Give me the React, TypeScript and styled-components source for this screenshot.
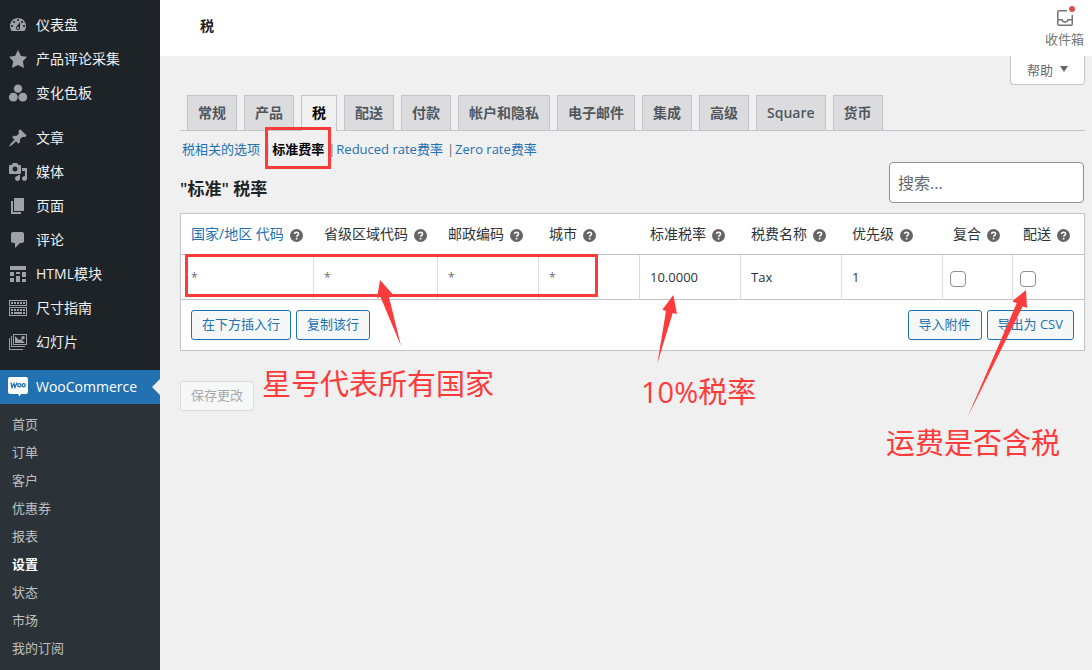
import React from "react";
import styled, { createGlobalStyle, css } from "styled-components";

const RED = "#fe3b3b";
const BORDER = "#c3c4c7";
const BLUE = "#2271b1";

const GlobalStyle = createGlobalStyle`
  * { box-sizing: border-box; }
  body {
    margin: 0;
    background: #f0f0f1;
    color: #3c434a;
    font-family: "Open Sans", "Noto Sans CJK SC", sans-serif;
    font-size: 13px;
    line-height: 20px;
  }
  button, input { font-family: inherit; }
  a { text-decoration: none; }
`;

const Page = styled.div`
  display: flex;
  min-height: 100vh;
  overflow: hidden;
`;

const Sidebar = styled.nav`
  flex: 0 0 160px;
  height: 100vh;
  overflow: hidden;
  background: #1d2327;
  padding-top: 8px;
`;

const MenuGroup = styled.ul`
  list-style: none;
  margin: 0 0 11px;
  padding: 0;
`;

const MenuLink = styled.a<{ $current?: boolean }>`
  position: relative;
  display: flex;
  align-items: center;
  gap: 8px;
  height: 34px;
  padding: 0 8px;
  color: ${(p) => (p.$current ? "#fff" : "#f0f0f1")};
  background: ${(p) => (p.$current ? BLUE : "transparent")};
  font-size: 14px;
  white-space: nowrap;
  svg {
    flex: none;
    width: 20px;
    height: 20px;
    fill: ${(p) => (p.$current ? "#fff" : "#9ca2a7")};
  }
  ${(p) =>
    p.$current &&
    css`
      &::after {
        content: "";
        position: absolute;
        right: 0;
        top: 9px;
        border: 8px solid transparent;
        border-left-width: 0;
        border-right-color: #f0f0f1;
      }
    `}
`;

const SubMenu = styled.ul`
  list-style: none;
  margin: 0;
  padding: 7px 0;
  background: #2c3338;
`;

const SubLink = styled.a<{ $current?: boolean }>`
  display: block;
  padding: 3px 12px 5px;
  color: ${(p) => (p.$current ? "#fff" : "#bdc0c3")};
  font-weight: ${(p) => (p.$current ? 600 : 400)};
`;

const Main = styled.main`
  position: relative;
  flex: 1;
  min-width: 0;
`;

const TopBar = styled.header`
  display: flex;
  justify-content: space-between;
  height: 56px;
  padding-left: 40px;
  background: #fff;
`;

const PageTitle = styled.h1`
  margin: 0;
  font-size: 14px;
  line-height: 52px;
  font-weight: 600;
  color: #1e1e1e;
`;

const InboxButton = styled.button`
  display: flex;
  flex-direction: column;
  align-items: center;
  width: 55px;
  padding: 6px 0 0;
  border: 0;
  background: none;
  color: #757575;
  font-size: 13px;
  line-height: 18px;
  svg { width: 24px; height: 24px; }
`;

const Content = styled.div`
  padding: 0 7px 0 20px;
`;

const HelpRow = styled.div`
  display: flex;
  justify-content: flex-end;
  height: 39px;
`;

const HelpButton = styled.button`
  display: flex;
  align-items: center;
  justify-content: center;
  gap: 7px;
  width: 75px;
  height: 29px;
  padding: 0 0 2px;
  border: 1px solid ${BORDER};
  border-top: 0;
  border-radius: 0 0 4px 4px;
  background: #fff;
  color: #646970;
  font-size: 13px;
  svg { width: 8px; height: 6px; fill: #646970; }
`;

const Tabs = styled.nav`
  display: flex;
  gap: 7px;
  height: 36px;
  padding-left: 7px;
  border-bottom: 1px solid ${BORDER};
`;

const Tab = styled.a<{ $active?: boolean }>`
  height: ${(p) => (p.$active ? 36 : 35)}px;
  padding: 5px 10px;
  border: 1px solid ${BORDER};
  border-bottom: 0;
  background: ${(p) => (p.$active ? "#f0f0f1" : "#dcdcde")};
  color: ${(p) => (p.$active ? "#000" : "#50575e")};
  font-size: 14px;
  line-height: 24px;
  font-weight: 600;
  white-space: nowrap;
`;

const Sections = styled.ul`
  display: flex;
  list-style: none;
  margin: 8px 0 0;
  padding: 0 2px;
  color: #646970;
  li + li::before { content: "|"; margin: 0 1px 0 4px; }
`;

const SectionLink = styled.a<{ $current?: boolean }>`
  color: ${(p) => (p.$current ? "#000" : BLUE)};
  font-weight: ${(p) => (p.$current ? 600 : 400)};
`;

const Heading = styled.div`
  display: flex;
  justify-content: space-between;
  margin-top: 3px;
  h2 {
    margin: 15px 0 0;
    font-size: 17px;
    line-height: 24px;
    font-weight: 600;
    color: #1d2327;
  }
`;

const Search = styled.input`
  width: 195px;
  height: 41px;
  margin-right: 1px;
  padding: 0 8px;
  border: 1px solid #8c8f94;
  border-radius: 4px;
  background: #fff;
  font-size: 16px;
  &::placeholder { color: #646970; opacity: 1; }
`;

const RatesTable = styled.table`
  width: 100%;
  margin-top: 10px;
  table-layout: fixed;
  border: 1px solid ${BORDER};
  border-spacing: 0;
  background: #fff;
  font-size: 14px;
  th {
    height: 41px;
    padding: 0 0 0 10px;
    border-bottom: 1px solid ${BORDER};
    color: #2c3338;
    font-weight: 400;
    text-align: left;
    white-space: nowrap;
    a { color: ${BLUE}; }
  }
  th + th { padding-left: 11px; }
  tbody td {
    height: 45px;
    padding: 0;
    border-bottom: 1px solid ${BORDER};
  }
  tbody td + td { border-left: 1px solid #dcdcde; }
  tfoot td { padding: 10px; }
`;

const HeadCell = styled.span`
  display: flex;
  align-items: center;
  gap: 6px;
  svg { flex: none; width: 13px; height: 13px; margin-top: 2px; }
`;

const CellInput = styled.input`
  display: block;
  width: 100%;
  height: 44px;
  padding: 0 10px;
  border: 0;
  background: transparent;
  color: #2c3338;
  font-size: 13px;
  &::placeholder { color: #646970; opacity: 1; font-size: 12px; }
`;

const Check = styled.input`
  appearance: none;
  display: block;
  width: 16px;
  height: 16px;
  margin: 3px 0 0 7px;
  border: 1px solid #8c8f94;
  border-radius: 4px;
  background: #fff;
`;

const ButtonBar = styled.div`
  display: flex;
  gap: 5px;
`;

const Spacer = styled.span`
  flex: 1;
`;

const Button = styled.button`
  height: 30px;
  padding: 0 10px 2px;
  border: 1px solid ${BLUE};
  border-radius: 3px;
  background: #f6f7f7;
  color: ${BLUE};
  font-size: 13px;
  line-height: 20px;
  white-space: nowrap;
  &:disabled {
    border-color: #dcdcde;
    color: #a7aaad;
  }
`;

const SaveRow = styled.div`
  margin-top: 30px;
`;

const Frame = styled.span<{ $x: number; $y: number; $w: number; $h: number }>`
  position: absolute;
  left: ${(p) => p.$x}px;
  top: ${(p) => p.$y}px;
  width: ${(p) => p.$w}px;
  height: ${(p) => p.$h}px;
  border: 3px solid ${RED};
  pointer-events: none;
`;

const Note = styled.span<{ $x: number; $y: number }>`
  position: absolute;
  left: ${(p) => p.$x}px;
  top: ${(p) => p.$y}px;
  color: ${RED};
  font-size: 29px;
  line-height: 40px;
  white-space: nowrap;
`;

const Arrows = styled.svg`
  position: absolute;
  left: 0;
  top: 0;
  width: 932px;
  height: 670px;
  fill: ${RED};
  pointer-events: none;
`;

const Icon = ({ children }: { children: React.ReactNode }) => (
  <svg viewBox="0 0 20 20" aria-hidden="true">{children}</svg>
);

const icons: Record<string, React.ReactNode> = {
  dashboard: <path fillRule="evenodd" d="M3.76 16h12.48c1.1-1.37 1.76-3.11 1.76-5 0-4.42-3.58-8-8-8s-8 3.58-8 8c0 1.89.66 3.63 1.76 5zM10 4c.55 0 1 .45 1 1s-.45 1-1 1-1-.45-1-1 .45-1 1-1zM6 6c.55 0 1 .45 1 1s-.45 1-1 1-1-.45-1-1 .45-1 1-1zm8 0c.55 0 1 .45 1 1s-.45 1-1 1-1-.45-1-1 .45-1 1-1zm-5.37 5.55L12 7v6c0 1.1-.9 2-2 2s-2-.9-2-2c0-.57.24-1.08.63-1.45zM4 10c.55 0 1 .45 1 1s-.45 1-1 1-1-.45-1-1 .45-1 1-1zm12 0c.55 0 1 .45 1 1s-.45 1-1 1-1-.45-1-1 .45-1 1-1zm-5 3c0-.55-.45-1-1-1s-1 .45-1 1 .45 1 1 1 1-.45 1-1z" />,
  star: <path d="M10 1l3 6 6 .75-4.12 4.62L16 19l-6-3-6 3 1.13-6.63L1 7.75 7 7z" />,
  swatches: <><circle cx="10" cy="5.6" r="4.2" /><circle cx="5.3" cy="14.2" r="4.4" /><circle cx="14.8" cy="14.2" r="4.4" /></>,
  pin: <path d="M10.44 3.02l1.82-1.82 6.36 6.35-1.83 1.82c-1.05-.68-2.48-.57-3.41.36l-.75.75c-.92.93-1.04 2.35-.35 3.41l-1.83 1.82-2.41-2.41-2.8 2.79c-.42.42-3.38 2.71-3.8 2.29s1.86-3.39 2.28-3.81l2.79-2.79L4.1 9.36l1.83-1.82c1.05.69 2.48.57 3.4-.36l.75-.75c.93-.92 1.05-2.35.36-3.41z" />,
  media: <path fillRule="evenodd" d="M13 11V4c0-.55-.45-1-1-1h-1.67L9 1H5L3.67 3H2c-.55 0-1 .45-1 1v7c0 .55.45 1 1 1h10c.55 0 1-.45 1-1zM7 4.5c1.38 0 2.5 1.12 2.5 2.5S8.38 9.5 7 9.5 4.5 8.38 4.5 7 5.62 4.5 7 4.5zM14 6h5v10.5c0 1.38-1.12 2.5-2.5 2.5S14 17.88 14 16.5s1.12-2.5 2.5-2.5c.17 0 .34.02.5.05V9h-3V6zm-4 8.05V13h2v3.5c0 1.38-1.12 2.5-2.5 2.5S7 17.88 7 16.5 8.12 14 9.5 14c.17 0 .34.02.5.05z" />,
  page: <path d="M6 15V2h10v13H6zm-1 1h8v2H3V5h2v11z" />,
  comment: <path d="M5 2h9c1.1 0 2 .9 2 2v7c0 1.1-.9 2-2 2h-2l-5 5v-5H5c-1.1 0-2-.9-2-2V4c0-1.1.9-2 2-2z" />,
  blocks: <path d="M2 2h16v4H2V2zm0 10V8h4v4H2zm6-2V8h4v2H8zm6 3V8h4v5h-4zm-6 5v-6h4v6H8zm-6 0v-4h4v4H2zm12 0v-3h4v3h-4z" />,
  sizes: <path fillRule="evenodd" d="M1 2h18v6H1zM2 3v4h16V3zM1 9h18v9H1zM2 10v7h16v-7zM3 4h2v2H3zM6 4h2v2H6zM9 4h2v2H9zM12 4h2v2h-2zM15 4h2v2h-2zM3 11h2v2H3zM6 11h2v2H6zM9 11h2v2H9zM12 11h2v2h-2zM15 11h2v2h-2zM3 14h2v2H3zM6 14h8v2H6zM15 14h2v2h-2z" />,
  slides: <><path fillRule="evenodd" d="M5 2h14v11H5zM6 3v9h12V3zM3 4h1v10h13v1H3zM1 6h1v11h13v1H1z" /><path d="M7 4l4 4 2-1 4 4H7z" /><circle cx="15" cy="5.800" r="1.800" /></>,
  woo: <><path d="M2 0h16a2 2 0 0 1 2 2v13a2 2 0 0 1-2 2h-5l-1.500 2.500L10 17H2a2 2 0 0 1-2-2V2a2 2 0 0 1 2-2z" /><g fill="none" stroke={BLUE} strokeWidth="1.3"><path d="M3 5.500l1 5 2-4 1 4 2-5" /><circle cx="11.3" cy="8.300" r="1.6" /><circle cx="15.6" cy="8.300" r="1.6" /></g></>,
};

const Help = () => (
  <svg viewBox="0 0 12 12" aria-hidden="true">
    <circle cx="6" cy="6" r="6" fill="#646464" />
    <path d="M4.2 4.7c0-2.4 3.7-2.3 3.7-.2 0 1.3-1.8 1.3-1.8 2.7" fill="none" stroke="#fff" strokeWidth="1.4" />
    <rect x="5.3" y="8.2" width="1.6" height="1.5" fill="#fff" />
  </svg>
);

const menu = [
  [["dashboard", "仪表盘"], ["star", "产品评论采集"], ["swatches", "变化色板"]],
  [["pin", "文章"], ["media", "媒体"], ["page", "页面"], ["comment", "评论"], ["blocks", "HTML模块"], ["sizes", "尺寸指南"], ["slides", "幻灯片"]],
];
const subItems = ["首页", "订单", "客户", "优惠券", "报表", "设置", "状态", "市场", "我的订阅"];
const tabs = ["常规", "产品", "税", "配送", "付款", "帐户和隐私", "电子邮件", "集成", "高级", "Square", "货币"];
const sections = ["税相关的选项", "标准费率", "Reduced rate费率", "Zero rate费率"];
const columns: { label: string; width: number; value?: string; any?: boolean; check?: boolean; link?: boolean }[] = [
  { label: "国家/地区 代码", width: 132, any: true, link: true },
  { label: "省级区域代码", width: 124, any: true },
  { label: "邮政编码", width: 101, any: true },
  { label: "城市", width: 101, any: true },
  { label: "标准税率", width: 101, value: "10.0000" },
  { label: "税费名称", width: 101, value: "Tax" },
  { label: "优先级", width: 101, value: "1" },
  { label: "复合", width: 70, check: true },
  { label: "配送", width: 72, check: true },
];

export default function App() {
  return (
    <>
      <GlobalStyle />
      <Page>
        <Sidebar>
          {menu.map((group, i) => (
            <MenuGroup key={i}>
              {group.map(([icon, label]) => (
                <li key={label}>
                  <MenuLink href="#"><Icon>{icons[icon]}</Icon>{label}</MenuLink>
                </li>
              ))}
            </MenuGroup>
          ))}
          <MenuLink href="#" $current><Icon>{icons.woo}</Icon>WooCommerce</MenuLink>
          <SubMenu>
            {subItems.map((s) => (
              <li key={s}><SubLink href="#" $current={s === "设置"}>{s}</SubLink></li>
            ))}
          </SubMenu>
        </Sidebar>
        <Main>
          <TopBar>
            <PageTitle>税</PageTitle>
            <InboxButton type="button">
              <svg viewBox="0 0 24 24" fill="none" aria-hidden="true">
                <path d="M14 4.75H6A1.25 1.25 0 0 0 4.75 6v12A1.25 1.25 0 0 0 6 19.25h12A1.25 1.25 0 0 0 19.25 18V9M5 13.7h4c.4 3 5.6 3 6 0h4" stroke="#757575" strokeWidth="1.5" />
                <circle cx="19" cy="3" r="3" fill="#d94f4f" />
              </svg>
              收件箱
            </InboxButton>
          </TopBar>
          <Content>
            <HelpRow>
              <HelpButton type="button">
                帮助
                <svg viewBox="0 0 8 6" aria-hidden="true"><path d="M0 0h8L4 6z" /></svg>
              </HelpButton>
            </HelpRow>
            <Tabs>
              {tabs.map((t) => <Tab key={t} href="#" $active={t === "税"}>{t}</Tab>)}
            </Tabs>
            <Sections>
              {sections.map((s) => (
                <li key={s}><SectionLink href="#" $current={s === "标准费率"}>{s}</SectionLink></li>
              ))}
            </Sections>
            <Heading>
              <h2>"标准" 税率</h2>
              <Search type="search" placeholder="搜索..." aria-label="搜索" />
            </Heading>
            <RatesTable>
              <colgroup>
                {columns.map((c) => <col key={c.label} width={c.width} />)}
              </colgroup>
              <thead>
                <tr>
                  {columns.map((c) => (
                    <th key={c.label} scope="col">
                      <HeadCell>{c.link ? <a href="#">{c.label}</a> : c.label}<Help /></HeadCell>
                    </th>
                  ))}
                </tr>
              </thead>
              <tbody>
                <tr>
                  {columns.map((c) => (
                    <td key={c.label}>
                      {c.check ? (
                        <Check type="checkbox" aria-label={c.label} />
                      ) : (
                        <CellInput type="text" aria-label={c.label} placeholder={c.any ? "*" : undefined} defaultValue={c.value} />
                      )}
                    </td>
                  ))}
                </tr>
              </tbody>
              <tfoot>
                <tr>
                  <td colSpan={9}>
                    <ButtonBar>
                      <Button type="button">在下方插入行</Button>
                      <Button type="button">复制该行</Button>
                      <Spacer />
                      <Button type="button">导入附件</Button>
                      <Button type="button">导出为 CSV</Button>
                    </ButtonBar>
                  </td>
                </tr>
              </tfoot>
            </RatesTable>
            <SaveRow><Button type="submit" disabled>保存更改</Button></SaveRow>
          </Content>
          <Frame $x={105} $y={127} $w={66} $h={42} />
          <Frame $x={25} $y={254} $w={413} $h={43} />
          <Arrows viewBox="160 0 932 670" aria-hidden="true">
            <path d="M380 280l12.500 14-3.500 3 12 49-20.500-49-3.500 1z" />
            <path d="M673.300 295l3.700 19-4.300-1-15.400 50.500 8.700-52.500-3.700-1.200z" />
            <path d="M1026 290l1 18-4.300-1.700-55 110.400 49-113.400-4.400-2z" />
          </Arrows>
          <Note $x={102} $y={364}>星号代表所有国家</Note>
          <Note $x={481} $y={372}>10%税率</Note>
          <Note $x={726} $y={423}>运费是否含税</Note>
        </Main>
      </Page>
    </>
  );
}
